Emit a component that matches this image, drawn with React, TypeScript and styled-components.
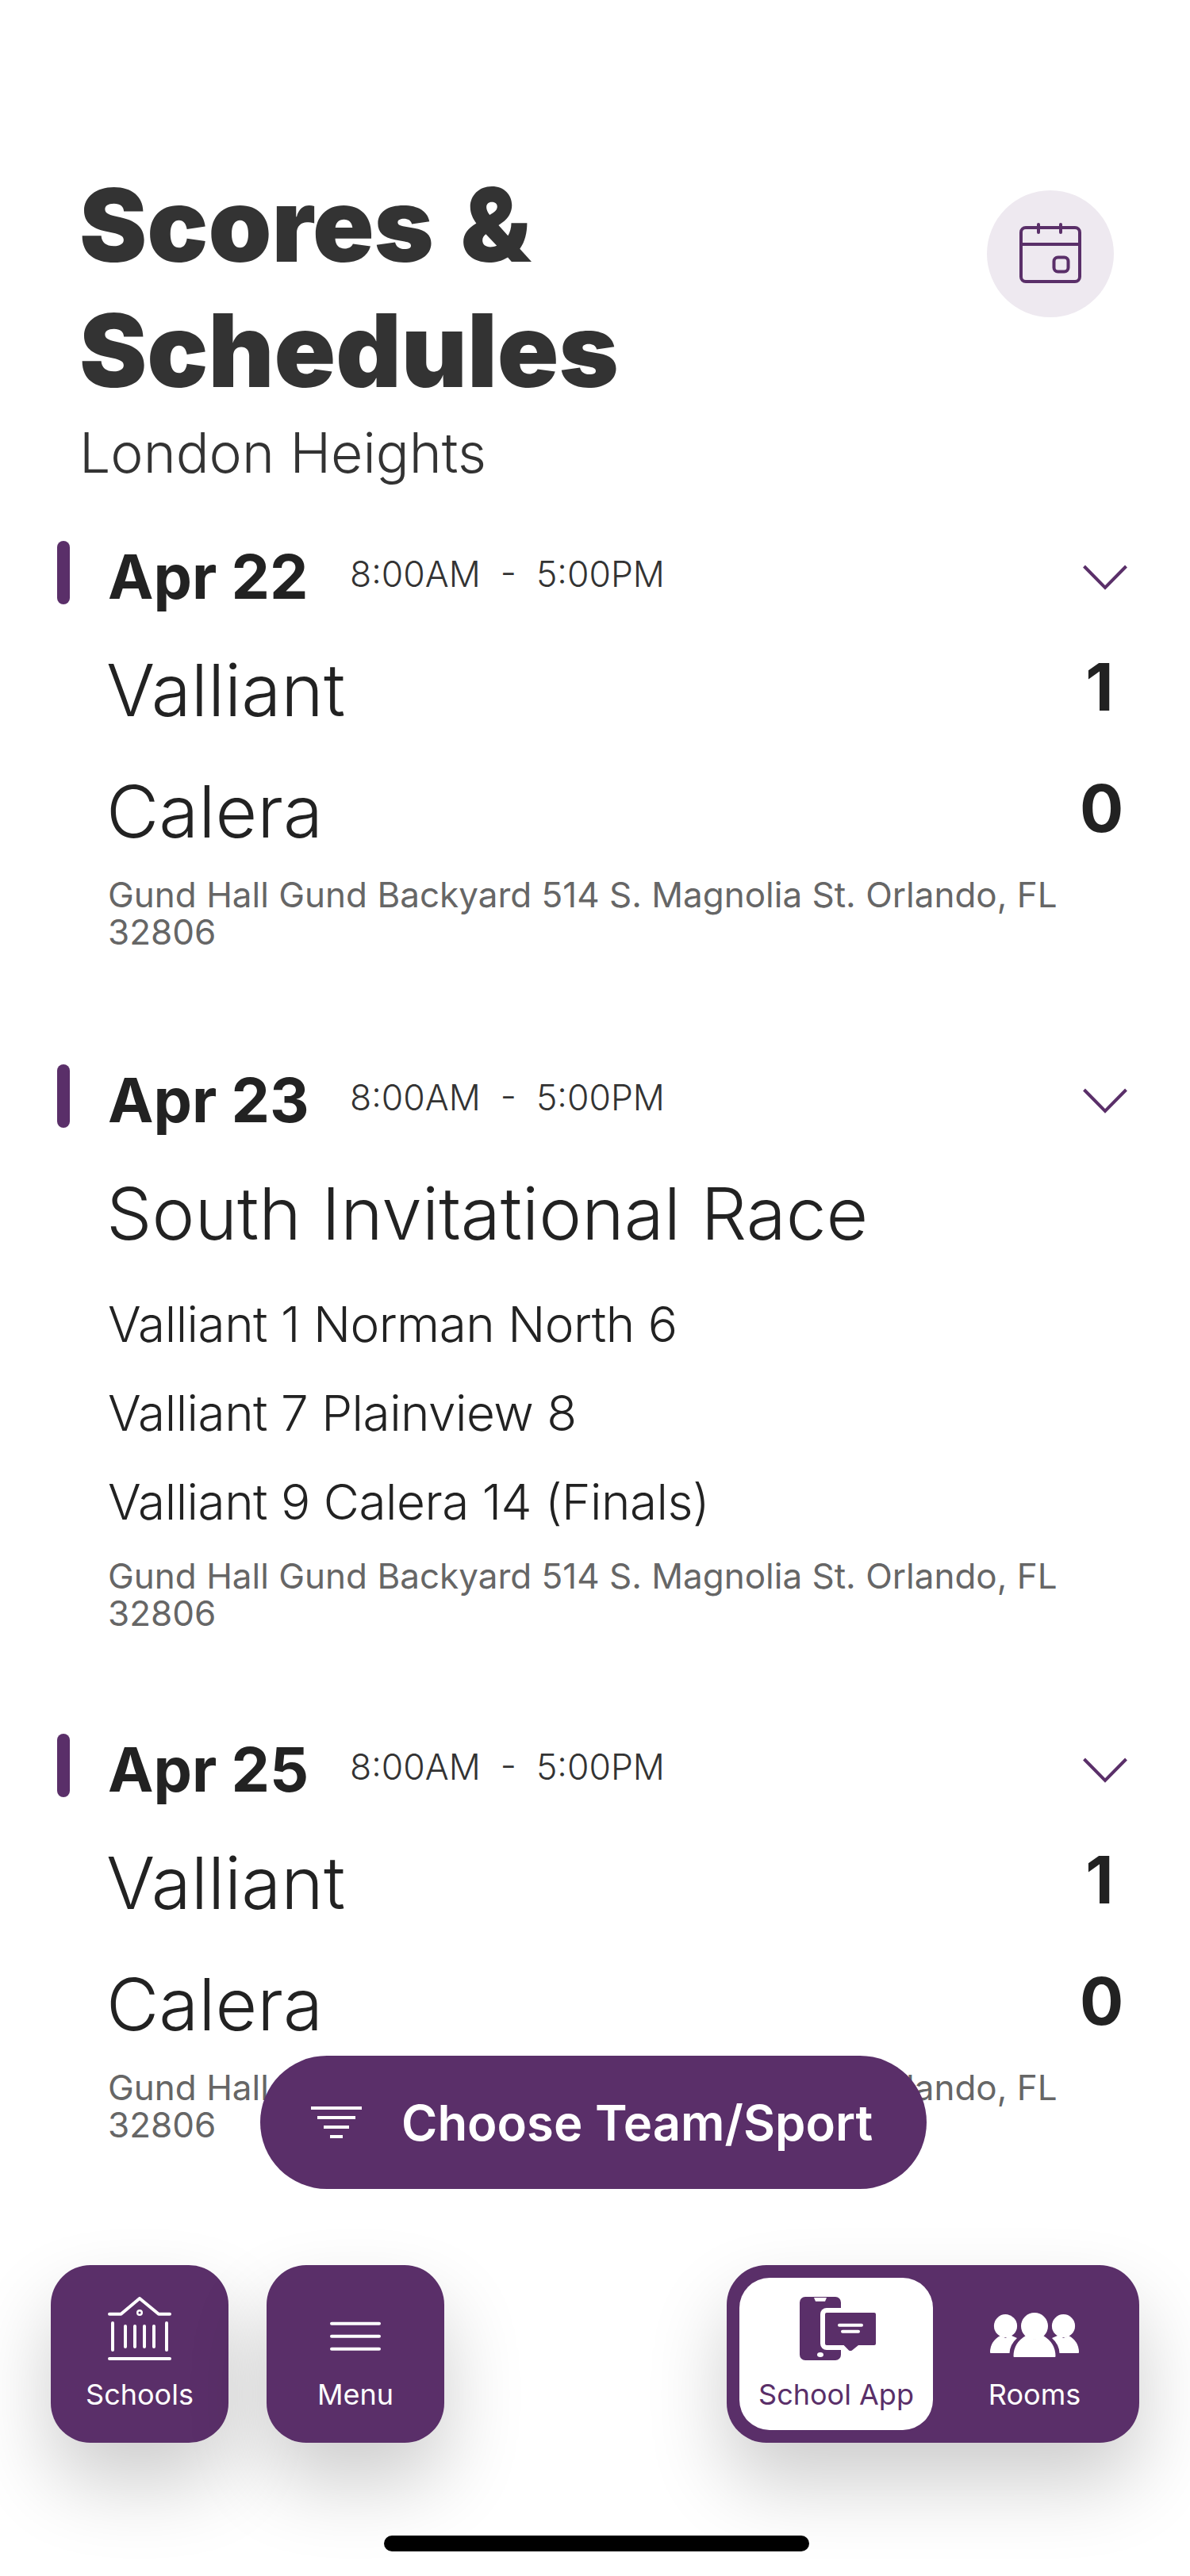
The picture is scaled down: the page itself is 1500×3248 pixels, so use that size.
import React from "react";
import styled, { createGlobalStyle } from "styled-components";

const PURPLE = "#5a2f69";
const ADDRESS = "Gund Hall Gund Backyard 514 S. Magnolia St. Orlando, FL 32806";

const GlobalStyle = createGlobalStyle`
    html, body {
        margin: 0;
        padding: 0;
        background: #fff;
    }
    body {
        font-family: Inter, "Liberation Sans", sans-serif;
    }
`;

type Team = { name: string; score: number };

type EventData = {
    date: string;
    gap: number;
    teams?: Team[];
    title?: string;
    heats?: string[];
};

const events: EventData[] = [
    {
        date: "Apr 22",
        gap: 143,
        teams: [
            { name: "Valliant", score: 1 },
            { name: "Calera", score: 0 },
        ],
    },
    {
        date: "Apr 23",
        gap: 128,
        title: "South Invitational Race",
        heats: ["Valliant 1 Norman North 6", "Valliant 7 Plainview 8", "Valliant 9 Calera 14 (Finals)"],
    },
    {
        date: "Apr 25",
        gap: 0,
        teams: [
            { name: "Valliant", score: 1 },
            { name: "Calera", score: 0 },
        ],
    },
];

function CalendarIcon() {
    return (
        <svg width="78" height="78" viewBox="0 0 78 78" fill="none" stroke={PURPLE} strokeWidth="4">
            <rect x="2" y="6" width="74" height="68" rx="6" />
            <path d="M2 27H76" />
            <path d="M24 2V12M52 2V12" strokeLinecap="round" />
            <rect x="43.500" y="43.500" width="18" height="18" rx="5" />
        </svg>
    );
}

function Chevron() {
    return (
        <ChevronSvg width="56" height="32" viewBox="0 0 56 32" fill="none" stroke={PURPLE} strokeWidth="4">
            <path d="M1.500 2L28 29L54.500 2" />
        </ChevronSvg>
    );
}

function FilterIcon() {
    return (
        <svg width="64" height="40" viewBox="0 0 64 40" fill="#fff">
            <rect x="0" y="0" width="64" height="4" />
            <rect x="8" y="12" width="48" height="4" />
            <rect x="16" y="24" width="32" height="4" />
            <rect x="24" y="36" width="16" height="4" />
        </svg>
    );
}

function SchoolIcon() {
    return (
        <svg width="80" height="80" viewBox="0 0 80 80" fill="none" stroke="#fff" strokeWidth="4" strokeLinecap="round" strokeLinejoin="round">
            <path d="M2 21.700H16.500L40 2L64 21.700H78" />
            <circle cx="40" cy="20" r="2.800" strokeWidth="2.400" />
            <path d="M6 33V67M22 37V63M34 37V63M46 37V63M58 37V63M74 33V67" />
            <path d="M2 78H78" />
        </svg>
    );
}

function MenuIcon() {
    return (
        <svg width="64" height="80" viewBox="0 0 64 80" fill="none" stroke="#fff" strokeWidth="4" strokeLinecap="round">
            <path d="M2 33.700H62M2 49.700H62M2 65.700H62" />
        </svg>
    );
}

function SchoolAppIcon() {
    return (
        <svg width="100" height="80" viewBox="-4 0 100 80">
            <rect x="0" y="0" width="52" height="80" rx="7" fill={PURPLE} />
            <path d="M18 1H34L32 5.700H20Z" fill="#fff" />
            <ellipse cx="26" cy="73" rx="4" ry="3" fill="#fff" />
            <rect x="26" y="14" width="40" height="53" rx="8" fill="#fff" />
            <path d="M50 60H80L64 72Z" fill="#fff" />
            <path
                d="M34 20H94Q96 20 96 22V59Q96 61 94 61H74L66 67.500Q64 68.500 62 67.500L55.600 61H34Q32 61 32 59V22Q32 20 34 20Z"
                fill={PURPLE}
            />
            <path d="M50 35.700H78M54 43.700H74" stroke="#fff" strokeWidth="4" strokeLinecap="round" />
        </svg>
    );
}

function RoomsIcon() {
    return (
        <svg width="112" height="80" viewBox="0 0 112 80" fill="#fff">
            <circle cx="56" cy="37" r="17" />
            <circle cx="19.500" cy="36.700" r="14.600" />
            <circle cx="92.500" cy="36.700" r="14.600" />
            <path d="M29.500 75Q29.500 58 45 49L56 54L67 49Q82.500 58 82.500 75Q82.500 76 81.500 76H30.500Q29.500 76 29.500 75Z" />
            <path d="M0 70Q0 56 13 49L19.500 52L26 48.500L34 52Q25 60 24.500 71H1Q0 71 0 70Z" />
            <path d="M112 70Q112 56 99 49L92.500 52L86 48.500L78 52Q87 60 87.500 71H111Q112 71 112 70Z" />
        </svg>
    );
}

export default function App() {
    return (
        <Page>
            <GlobalStyle />
            <Header>
                <div>
                    <Title>
                        Scores &amp;
                        <br />
                        Schedules
                    </Title>
                    <SchoolName>London Heights</SchoolName>
                </div>
                <CalendarButton>
                    <CalendarIcon />
                </CalendarButton>
            </Header>
            {events.map((event) => (
                <Event key={event.date} $gap={event.gap}>
                    <EventHead>
                        <Marker />
                        <DateLabel>{event.date}</DateLabel>
                        <TimeRange>8:00AM&nbsp; -&nbsp; 5:00PM</TimeRange>
                        <Chevron />
                    </EventHead>
                    <EventBody>
                        {event.teams &&
                            event.teams.map((team) => (
                                <TeamRow key={team.name}>
                                    <TeamName>{team.name}</TeamName>
                                    <Score>{team.score}</Score>
                                </TeamRow>
                            ))}
                        {event.title && <TeamName as="div">{event.title}</TeamName>}
                        {event.heats && (
                            <Heats>
                                {event.heats.map((heat) => (
                                    <Heat key={heat}>{heat}</Heat>
                                ))}
                            </Heats>
                        )}
                        <Address>{ADDRESS}</Address>
                    </EventBody>
                </Event>
            ))}
            <FilterPill>
                <FilterIcon />
                <span>Choose Team/Sport</span>
            </FilterPill>
            <BottomBar>
                <NavGroup>
                    <NavButton>
                        <NavIcon>
                            <SchoolIcon />
                        </NavIcon>
                        <NavLabel>Schools</NavLabel>
                    </NavButton>
                    <NavButton>
                        <NavIcon>
                            <MenuIcon />
                        </NavIcon>
                        <NavLabel>Menu</NavLabel>
                    </NavButton>
                </NavGroup>
                <Switcher>
                    <SwitchItem $active>
                        <NavIcon>
                            <SchoolAppIcon />
                        </NavIcon>
                        <NavLabel>School App</NavLabel>
                    </SwitchItem>
                    <SwitchItem>
                        <NavIcon>
                            <RoomsIcon />
                        </NavIcon>
                        <NavLabel>Rooms</NavLabel>
                    </SwitchItem>
                </Switcher>
            </BottomBar>
            <HomeIndicator />
        </Page>
    );
}

const Page = styled.main`
    position: relative;
    width: 1500px;
    height: 3248px;
    overflow: hidden;
    background: #fff;
    color: #222;
`;

const Header = styled.header`
    display: flex;
    justify-content: space-between;
    align-items: flex-start;
    padding: 205px 96px 0 100px;
    height: 682px;
    box-sizing: border-box;
`;

const Title = styled.h1`
    margin: 0;
    font-size: 128px;
    line-height: 158px;
    font-weight: 900;
    word-spacing: 8px;
    color: #333;
`;

const SchoolName = styled.div`
    margin-top: 18px;
    font-size: 69.700px;
    line-height: 64px;
    font-weight: 300;
    color: #333;
`;

const CalendarButton = styled.div`
    display: flex;
    align-items: center;
    justify-content: center;
    width: 160px;
    height: 160px;
    margin-top: 35px;
    border-radius: 50%;
    background: #eee9f0;
`;

const Event = styled.section<{ $gap: number }>`
    padding: 0 79px 0 72px;
    margin-bottom: ${(p) => p.$gap}px;
`;

const EventHead = styled.div`
    display: flex;
    align-items: center;
    height: 80px;
`;

const Marker = styled.div`
    width: 16px;
    height: 80px;
    border-radius: 8px;
    background: ${PURPLE};
    margin-right: 48px;
`;

const DateLabel = styled.div`
    width: 305px;
    padding-top: 9px;
    font-size: 77px;
    font-weight: 700;
    color: #222;
`;

const TimeRange = styled.div`
    flex: 1;
    padding-top: 3px;
    font-size: 44.500px;
    font-weight: 300;
    color: #333;
`;

const ChevronSvg = styled.svg`
    margin-top: 12px;
`;

const EventBody = styled.div`
    margin: 32px 9px 0 64px;
`;

const TeamRow = styled.div`
    display: flex;
    align-items: center;
    justify-content: space-between;
    height: 153px;
`;

const TeamName = styled.span`
    display: block;
    margin-left: -2px;
    font-size: 91px;
    line-height: 153px;
    font-weight: 300;
    color: #222;
`;

const Score = styled.span`
    width: 50px;
    margin: 0 1px 9px 0;
    font-size: 82px;
    font-weight: 700;
    text-align: center;
    color: #222;
`;

const Heats = styled.div`
    display: flex;
    flex-direction: column;
    padding: 7px 0 9px;
`;

const Heat = styled.div`
    font-size: 62px;
    line-height: 112px;
    font-weight: 300;
    color: #222;
    letter-spacing: -0.5px;
`;

const Address = styled.div`
    margin-top: 5px;
    font-size: 44px;
    line-height: 47px;
    font-weight: 400;
    color: #666;
`;

const FilterPill = styled.div`
    position: absolute;
    left: 328px;
    top: 2592px;
    width: 840px;
    height: 168px;
    box-sizing: border-box;
    padding-left: 64px;
    display: flex;
    align-items: center;
    gap: 50px;
    border-radius: 84px;
    background: ${PURPLE};
    color: #fff;
    font-size: 61.600px;
    font-weight: 600;
`;

const BottomBar = styled.nav`
    position: absolute;
    left: 64px;
    right: 64px;
    top: 2856px;
    display: flex;
    justify-content: space-between;
`;

const NavGroup = styled.div`
    display: flex;
    gap: 48px;
`;

const NavButton = styled.div`
    display: flex;
    flex-direction: column;
    align-items: center;
    box-sizing: border-box;
    width: 224px;
    height: 224px;
    padding-top: 40px;
    border-radius: 50px;
    background: ${PURPLE};
    color: #fff;
    box-shadow: 0 50px 100px rgba(0, 0, 0, 0.2);
`;

const NavIcon = styled.div`
    display: flex;
    align-items: center;
    justify-content: center;
    height: 80px;
`;

const NavLabel = styled.div`
    margin-top: 20px;
    font-size: 36px;
    line-height: 46px;
    font-weight: 400;
`;

const Switcher = styled.div`
    display: flex;
    width: 520px;
    height: 224px;
    box-sizing: border-box;
    padding: 16px;
    border-radius: 50px;
    background: ${PURPLE};
    box-shadow: 0 50px 100px rgba(0, 0, 0, 0.2);
`;

const SwitchItem = styled.div<{ $active?: boolean }>`
    flex: ${(p) => (p.$active ? "0 0 244px" : "1")};
    display: flex;
    flex-direction: column;
    align-items: center;
    box-sizing: border-box;
    height: 192px;
    padding: 24px 0 0 ${(p) => (p.$active ? 0 : 12)}px;
    border-radius: 38px;
    color: ${(p) => (p.$active ? PURPLE : "#fff")};
    background: ${(p) => (p.$active ? "#fff" : "transparent")};
`;

const HomeIndicator = styled.div`
    position: absolute;
    left: 484px;
    top: 3197px;
    width: 536px;
    height: 20px;
    border-radius: 10px;
    background: #000;
`;
